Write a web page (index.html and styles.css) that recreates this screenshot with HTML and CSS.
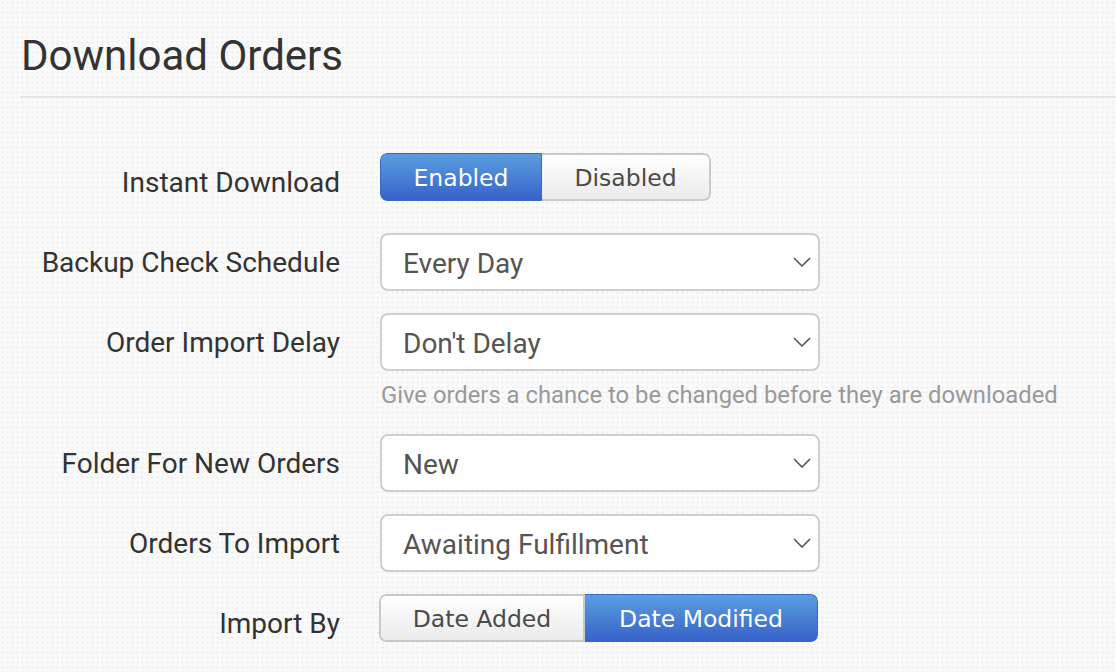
FILE: index.html
```html
<!DOCTYPE html>
<html>
<head>
<meta charset="utf-8">
<link rel="stylesheet" href="styles.css">
</head>
<body>
<div class="page">
  <h1 class="title">Download Orders</h1>
  <div class="rule"></div>
  <div class="form">
    <div class="label">Instant Download</div>
    <div class="control">
      <div class="toggle">
        <span class="opt on">Enabled</span><span class="opt off">Disabled</span>
      </div>
    </div>

    <div class="label">Backup Check Schedule</div>
    <div class="control">
      <div class="select"><span>Every Day</span>
        <svg class="chev" width="18" height="10" viewBox="0 0 18 10"><path d="M1 1 L9 9 L17 1" fill="none" stroke="#555" stroke-width="1.6"/></svg>
      </div>
    </div>

    <div class="label">Order Import Delay</div>
    <div class="control">
      <div class="select"><span>Don't Delay</span>
        <svg class="chev" width="18" height="10" viewBox="0 0 18 10"><path d="M1 1 L9 9 L17 1" fill="none" stroke="#555" stroke-width="1.6"/></svg>
      </div>
      <div class="hint">Give orders a chance to be changed before they are downloaded</div>
    </div>

    <div class="label">Folder For New Orders</div>
    <div class="control">
      <div class="select"><span>New</span>
        <svg class="chev" width="18" height="10" viewBox="0 0 18 10"><path d="M1 1 L9 9 L17 1" fill="none" stroke="#555" stroke-width="1.6"/></svg>
      </div>
    </div>

    <div class="label">Orders To Import</div>
    <div class="control">
      <div class="select"><span>Awaiting Fulfillment</span>
        <svg class="chev" width="18" height="10" viewBox="0 0 18 10"><path d="M1 1 L9 9 L17 1" fill="none" stroke="#555" stroke-width="1.6"/></svg>
      </div>
    </div>

    <div class="label">Import By</div>
    <div class="control shift">
      <div class="toggle">
        <span class="opt off wide1">Date Added</span><span class="opt on wide2">Date Modified</span>
      </div>
    </div>
  </div>
</div>
</body>
</html>
```
FILE: styles.css
```css
html, body {
  margin: 0;
  padding: 0;
}
body {
  background-color: #fafafa;
  background-image: radial-gradient(rgba(0,0,0,0.035) 1px, transparent 1.2px);
  background-size: 5px 5px;
  font-family: Roboto, "Liberation Sans", sans-serif;
  width: 1116px;
  height: 672px;
  overflow: hidden;
}
.page {
  padding-left: 20px;
}
.title {
  margin: 0;
  padding-top: 31px;
  padding-left: 1px;
  font-size: 42px;
  line-height: 50px;
  font-weight: 400;
  color: #333;
}
.rule {
  margin-top: 15px;
  border-top: 2px solid #e3e3e3;
}
.form {
  margin-top: 55px;
  display: grid;
  grid-template-columns: 320px 440px;
  column-gap: 40px;
  row-gap: 22px;
  grid-auto-rows: auto;
}
.label {
  height: 58px;
  display: flex;
  align-items: center;
  justify-content: flex-end;
  font-size: 28px;
  color: #333;
}
.control {
  display: flex;
  flex-direction: column;
  align-items: flex-start;
}
.control.shift {
  margin-left: -1px;
}
.toggle {
  display: flex;
  height: 48px;
  border-radius: 7px;
  overflow: hidden;
  box-sizing: border-box;
}
.opt {
  display: flex;
  align-items: center;
  justify-content: center;
  box-sizing: border-box;
  height: 48px;
  font-family: "DejaVu Sans", Verdana, sans-serif;
  font-size: 23.5px;
  padding-top: 1px;
}
.opt.on {
  width: 162px;
  color: #fff;
  background: linear-gradient(#5a9ee0, #3762c9);
  border: 1px solid #3a68c6;
}
.opt.off {
  width: 169px;
  color: #4a4a4a;
  background: linear-gradient(#ffffff, #ebebeb);
  border: 2px solid #c9c9c9;
}
.toggle .opt:first-child {
  border-radius: 7px 0 0 7px;
}
.toggle .opt:last-child {
  border-radius: 0 7px 7px 0;
}
.opt.on + .opt.off {
  border-left: none;
}
.opt.off + .opt.on {
  border-left: none;
}
.opt.wide1 {
  width: 206px;
}
.opt.wide2 {
  width: 233px;
}
.select {
  width: 440px;
  height: 58px;
  box-sizing: border-box;
  border: 2px solid #cfcfcf;
  border-radius: 8px;
  background: #fff;
  display: flex;
  align-items: center;
  justify-content: space-between;
  padding: 0 7px 0 21px;
  font-size: 28px;
  color: #555;
}
.select span {
  padding-top: 3px;
}
.chev {
  display: block;
}
.hint {
  margin-top: 8px;
  padding-left: 1px;
  font-size: 23.8px;
  line-height: 32px;
  color: #999;
  white-space: nowrap;
  margin-bottom: 1px;
}
```
